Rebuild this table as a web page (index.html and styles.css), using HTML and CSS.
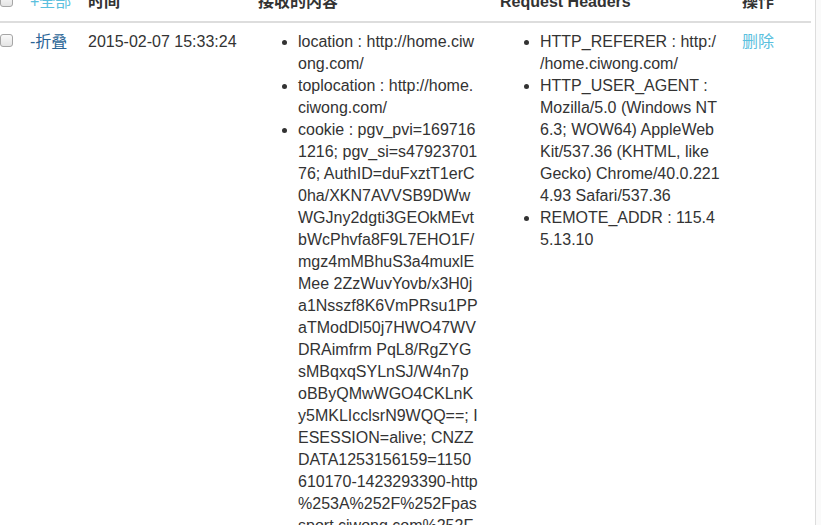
FILE: index.html
```html
<!DOCTYPE html>
<html lang="zh-CN">
<head>
<meta charset="utf-8">
<title>日志</title>
<link rel="stylesheet" href="styles.css">
</head>
<body>
<div class="panel">
  <table class="log-table">
    <colgroup>
      <col class="c-check">
      <col class="c-toggle">
      <col class="c-time">
      <col class="c-content">
      <col class="c-headers">
      <col class="c-op">
    </colgroup>
    <thead>
      <tr>
        <th class="cell-check"><input class="check" type="checkbox"></th>
        <th><a class="link-light" href="#">+全部</a></th>
        <th>时间</th>
        <th>接收的内容</th>
        <th>Request Headers</th>
        <th>操作</th>
      </tr>
    </thead>
    <tbody>
      <tr>
        <td class="cell-check"><input class="check" type="checkbox"></td>
        <td><a class="link-dark" href="#">-折叠</a></td>
        <td>2015-02-07 15:33:24</td>
        <td>
          <ul class="kv-list">
            <li>location : http://home.ciwong.com/</li>
            <li>toplocation : http://home.ciwong.com/</li>
            <li>cookie : pgv_pvi=1697161216; pgv_si=s4792370176; AuthID=duFxztT1erC0ha/XKN7AVVSB9DWwWGJny2dgti3GEOkMEvtbWcPhvfa8F9L7EHO1F/mgz4mMBhuS3a4muxlEMee 2ZzWuvYovb/x3H0ja1Nsszf8K6VmPRsu1PPaTModDl50j7HWO47WVDRAimfrm PqL8/RgZYGsMBqxqSYLnSJ/W4n7p oBByQMwWGO4CKLnK y5MKLIcclsrN9WQQ==; IESESSION=alive; CNZZDATA1253156159=1150610170-1423293390-http%253A%252F%252Fpassport.ciwong.com%252F%7C1423293390</li>
          </ul>
        </td>
        <td>
          <ul class="kv-list">
            <li>HTTP_REFERER : http://home.ciwong.com/</li>
            <li>HTTP_USER_AGENT : Mozilla/5.0 (Windows NT 6.3; WOW64) AppleWebKit/537.36 (KHTML, like Gecko) Chrome/40.0.2214.93 Safari/537.36</li>
            <li>REMOTE_ADDR : 115.45.13.10</li>
          </ul>
        </td>
        <td><a class="link-light" href="#">删除</a></td>
      </tr>
    </tbody>
  </table>
</div>
</body>
</html>
```

FILE: styles.css
```css
html, body {
  margin: 0;
  padding: 0;
}

body {
  background: #fafafa;
  font-family: "Liberation Sans", Arial, "Noto Sans CJK SC", sans-serif;
  font-size: 16px;
  line-height: 22px;
  color: #333;
  overflow: hidden;
}

.panel {
  width: 815px;
  min-height: 600px;
  margin-top: -17px;
  background: #fff;
  border-right: 1px solid #ddd;
}

.log-table {
  width: 811px;
  table-layout: fixed;
  border-collapse: collapse;
  border-spacing: 0;
}

.c-check { width: 22px; }
.c-toggle { width: 58px; }
.c-time { width: 170px; }
.c-content { width: 242px; }
.c-headers { width: 242px; }
.c-op { width: 77px; }

.log-table th,
.log-table td {
  padding: 8px;
  text-align: left;
}

.log-table th {
  font-weight: bold;
  vertical-align: bottom;
  border-bottom: 2px solid #ddd;
}

.log-table td {
  vertical-align: top;
}

.log-table .cell-check {
  padding-left: 0;
}

.check {
  appearance: none;
  -webkit-appearance: none;
  display: block;
  box-sizing: border-box;
  width: 13px;
  height: 13px;
  margin: 3px 0 6px 0;
  border: 1px solid #a6a6a6;
  border-radius: 3px;
  background: linear-gradient(#fafafa, #e4e4e4);
}

.link-light {
  color: #5bc0de;
  text-decoration: none;
  font-weight: normal;
}

.link-dark {
  color: #2a6496;
  text-decoration: none;
}

.kv-list {
  margin: 0;
  padding: 0 6px 0 40px;
}

.kv-list li {
  word-break: break-all;
  line-break: anywhere;
}
```
